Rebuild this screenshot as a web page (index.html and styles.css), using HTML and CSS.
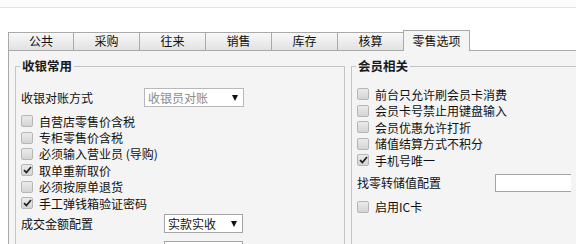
FILE: index.html
```html
<!DOCTYPE html>
<html lang="zh-CN">
<head>
  <meta charset="UTF-8">
  <title>零售选项</title>
  <link rel="stylesheet" href="styles.css">
</head>
<body>
  <div class="topbar"></div>

  <!-- 选项卡 -->
  <div class="tabs">
    <div class="tab">公共</div>
    <div class="tab">采购</div>
    <div class="tab">往来</div>
    <div class="tab">销售</div>
    <div class="tab">库存</div>
    <div class="tab">核算</div>
    <div class="tab active">零售选项</div>
  </div>

  <div class="panel">
    <!-- 收银常用 -->
    <fieldset class="group group-left">
      <legend>收银常用</legend>
      <div class="field field-first">
        <span class="field-label label-a">收银对账方式</span>
        <div class="select disabled sel-a">收银员对账<span class="arrow"></span></div>
      </div>
      <div class="checks checks-left">
        <label class="check"><span class="box"></span>自营店零售价含税</label>
        <label class="check"><span class="box"></span>专柜零售价含税</label>
        <label class="check"><span class="box"></span>必须输入营业员 (导购)</label>
        <label class="check"><span class="box"><svg width="9" height="8" viewBox="0 0 9 8"><path d="M1 4.2 L3.4 6.5 L8 1" fill="none" stroke="#222" stroke-width="1.8"/></svg></span>取单重新取价</label>
        <label class="check"><span class="box"></span>必须按原单退货</label>
        <label class="check"><span class="box"><svg width="9" height="8" viewBox="0 0 9 8"><path d="M1 4.2 L3.4 6.5 L8 1" fill="none" stroke="#222" stroke-width="1.8"/></svg></span>手工弹钱箱验证密码</label>
      </div>
      <div class="field field-deal">
        <span class="field-label label-b">成交金额配置</span>
        <div class="select sel-b">实款实收<span class="arrow"></span></div>
      </div>
      <div class="field-more">
        <div class="select-edge"></div>
      </div>
    </fieldset>

    <!-- 会员相关 -->
    <fieldset class="group group-right">
      <legend>会员相关</legend>
      <div class="checks checks-right">
        <label class="check"><span class="box"></span>前台只允许刷会员卡消费</label>
        <label class="check"><span class="box"></span>会员卡号禁止用键盘输入</label>
        <label class="check"><span class="box"></span>会员优惠允许打折</label>
        <label class="check"><span class="box"></span>储值结算方式不积分</label>
        <label class="check"><span class="box"><svg width="9" height="8" viewBox="0 0 9 8"><path d="M1 4.2 L3.4 6.5 L8 1" fill="none" stroke="#222" stroke-width="1.8"/></svg></span>手机号唯一</label>
      </div>
      <div class="field field-change">
        <span class="field-label label-c">找零转储值配置</span>
        <div class="input"></div>
      </div>
      <div class="checks checks-ic">
        <label class="check"><span class="box"></span>启用IC卡</label>
      </div>
    </fieldset>
  </div>
</body>
</html>
```

FILE: styles.css
```css
html, body {
  margin: 0;
  overflow: hidden;
}
body {
  width: 576px;
  height: 244px;
  font-family: "Noto Sans CJK SC", "Liberation Sans", sans-serif;
  font-size: 12px;
  color: #111;
  background-color: #fff;
}
.topbar {
  height: 7px;
  border-bottom: 1px solid #e3e3e3;
  background-color: #fcfcfc;
}

/* tabs */
.tabs {
  display: flex;
  align-items: flex-end;
  height: 20px;
  margin: 22px 0 0 8px;
  position: relative;
  z-index: 1;
}
.tab {
  box-sizing: border-box;
  width: 66px;
  height: 18px;
  line-height: 16px;
  text-align: center;
  border: 1px solid #a9a9a9;
  border-left: 0;
  border-bottom: 0;
  background: linear-gradient(#f8f8f8, #e2e2e2);
}
.tab:first-child {
  border-left: 1px solid #a9a9a9;
}
.tab.active {
  width: 67px;
  height: 21px;
  line-height: 19px;
  margin-left: -1px;
  margin-bottom: -1px;
  border-left: 1px solid #a9a9a9;
  background: #f4f4f4;
}

/* panel */
.panel {
  display: flex;
  gap: 6px;
  box-sizing: border-box;
  width: 568px;
  height: 194px;
  margin-left: 8px;
  padding: 8px 0 0 6px;
  border: 1px solid #a9a9a9;
  border-right: 0;
  border-bottom: 0;
  background-color: #f4f4f4;
  overflow: hidden;
}
.group {
  box-sizing: border-box;
  height: 185px;
  margin: 0;
  padding: 0 5px;
  border: 1px solid #c4c4c4;
  border-bottom: 0;
  min-width: 0;
  flex-shrink: 0;
}
.group legend {
  margin-left: -1px;
  padding: 0 2px;
  font-size: 12.5px;
  font-weight: bold;
  line-height: 14px;
  color: #1a1a1a;
}
.group-left {
  width: 330px;
}
.group-right {
  width: 225px;
  border-right: 0;
}

/* fields */
.field {
  display: flex;
  align-items: center;
  height: 19px;
}
.field-label {
  flex-shrink: 0;
}
.label-a { width: 123px; }
.label-b { width: 143px; }
.label-c { width: 138px; }
.field-first { margin-top: 15px; }
.field-deal { margin-top: 3px; }
.field-more {
  margin-top: 8px;
  padding-left: 143px;
}
.field-change {
  margin-top: 5px;
  height: 18px;
}

.select {
  box-sizing: border-box;
  display: flex;
  align-items: center;
  justify-content: space-between;
  height: 19px;
  padding: 0 5px 0 3px;
  line-height: 17px;
  border: 1px solid #a5a5a5;
  background-color: #fff;
}
.select.disabled {
  color: #8a8a8a;
  border-color: #b8b8b8;
}
.sel-a { width: 100px; }
.sel-b { width: 79px; }
.select-edge {
  box-sizing: border-box;
  width: 79px;
  height: 3px;
  border: 1px solid #a5a5a5;
  border-bottom: 0;
  background-color: #fff;
}
.arrow {
  width: 0;
  height: 0;
  border-left: 3.5px solid transparent;
  border-right: 3.5px solid transparent;
  border-top: 6px solid #111;
}
.input {
  box-sizing: border-box;
  width: 81px;
  height: 18px;
  border: 1px solid #a5a5a5;
  border-right: 0;
  background-color: #fff;
}

/* checkboxes */
.checks-left { margin-top: 6px; }
.checks-right { margin-top: 13px; }
.checks-ic { margin-top: 7px; }
.check {
  display: flex;
  align-items: center;
  height: 16.4px;
  white-space: nowrap;
}
.group-right .check {
  height: 16.5px;
}
.box {
  box-sizing: border-box;
  display: flex;
  align-items: center;
  justify-content: center;
  flex-shrink: 0;
  width: 12px;
  height: 12px;
  margin-right: 6px;
  border: 1px solid #b6b6b6;
  border-radius: 2px;
  background: linear-gradient(#ebebeb, #d4d4d4);
}
```
